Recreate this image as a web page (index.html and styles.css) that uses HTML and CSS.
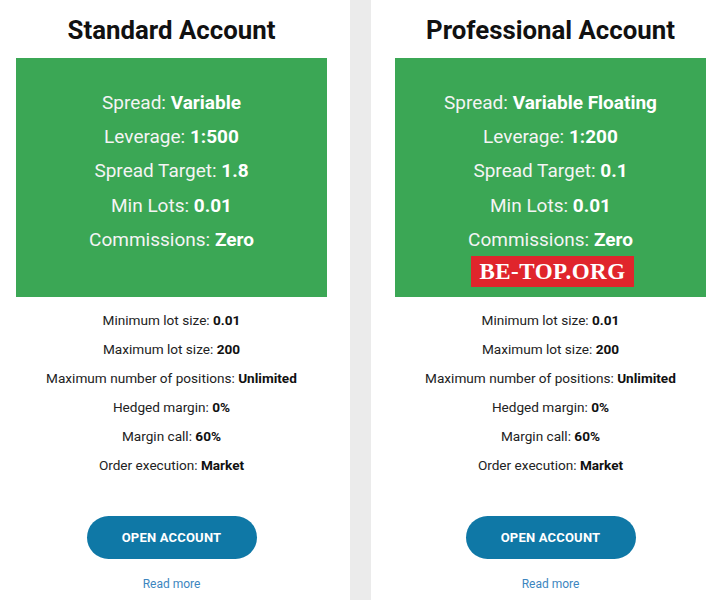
FILE: index.html
```html
<!DOCTYPE html>
<html lang="en">
<head>
    <meta charset="UTF-8">
    <meta name="viewport" content="width=device-width, initial-scale=1.0">
    <title>Account Types</title>
    <link rel="stylesheet" href="styles.css">
</head>
<body>
    <div class="accounts">
        <div class="account account-left">
            <h2>Standard Account</h2>
            <div class="highlights">
                <p>Spread: <b>Variable</b></p>
                <p>Leverage: <b>1:500</b></p>
                <p>Spread Target: <b>1.8</b></p>
                <p>Min Lots: <b>0.01</b></p>
                <p>Commissions: <b>Zero</b></p>
            </div>
            <ul class="details">
                <li>Minimum lot size: <b>0.01</b></li>
                <li>Maximum lot size: <b>200</b></li>
                <li>Maximum number of positions: <b>Unlimited</b></li>
                <li>Hedged margin: <b>0%</b></li>
                <li>Margin call: <b>60%</b></li>
                <li>Order execution: <b>Market</b></li>
            </ul>
            <a href="#" class="open-btn">OPEN ACCOUNT</a>
            <a href="#" class="read-more">Read more</a>
        </div>

        <div class="divider"></div>

        <div class="account account-right">
            <h2>Professional Account</h2>
            <div class="highlights">
                <p>Spread: <b>Variable Floating</b></p>
                <p>Leverage: <b>1:200</b></p>
                <p>Spread Target: <b>0.1</b></p>
                <p>Min Lots: <b>0.01</b></p>
                <p>Commissions: <b>Zero</b></p>
                <span class="watermark">BE-TOP.ORG</span>
            </div>
            <ul class="details">
                <li>Minimum lot size: <b>0.01</b></li>
                <li>Maximum lot size: <b>200</b></li>
                <li>Maximum number of positions: <b>Unlimited</b></li>
                <li>Hedged margin: <b>0%</b></li>
                <li>Margin call: <b>60%</b></li>
                <li>Order execution: <b>Market</b></li>
            </ul>
            <a href="#" class="open-btn">OPEN ACCOUNT</a>
            <a href="#" class="read-more">Read more</a>
        </div>
    </div>
</body>
</html>
```

FILE: styles.css
```css
body {
    margin: 0;
    font-family: Roboto, "Liberation Sans", Arial, sans-serif;
    background: #fff;
    color: #222;
}

.accounts {
    display: grid;
    grid-template-columns: 350px 21px 351px;
    height: 600px;
}

.divider {
    background: #ebebeb;
}

.account {
    display: flex;
    flex-direction: column;
    align-items: center;
    text-align: center;
}

.account-left {
    padding: 0 23px 0 16px;
}

.account-right {
    padding: 0 16px 0 24px;
}

.account h2 {
    margin: 14px 0 0;
    height: 44px;
    font-size: 25.8px;
    font-weight: 700;
    line-height: 32px;
    color: #111;
}

.highlights {
    position: relative;
    align-self: stretch;
    height: 239px;
    box-sizing: border-box;
    padding-top: 28px;
    background: #3ba755;
    color: #f4f4f4;
}

.highlights p {
    margin: 0;
    font-size: 19px;
    line-height: 34.2px;
}

.highlights b {
    color: #fff;
}

.watermark {
    position: absolute;
    left: 76px;
    top: 198px;
    width: 163px;
    height: 31px;
    background: #e0252c;
    color: #fff;
    font-family: "Liberation Serif", "Times New Roman", serif;
    font-weight: 700;
    font-size: 23px;
    line-height: 31px;
    letter-spacing: 0.5px;
}

.details {
    list-style: none;
    margin: 0;
    padding: 9px 0 0;
}

.details li {
    font-size: 13.6px;
    line-height: 29px;
    color: #222;
}

.details b {
    color: #111;
}

.open-btn {
    margin-top: 36px;
    width: 170px;
    height: 43px;
    border-radius: 22px;
    background: #0f78a6;
    color: #fff;
    font-size: 13px;
    font-weight: 700;
    line-height: 43px;
    text-decoration: none;
    letter-spacing: 0.2px;
}

.read-more {
    margin-top: 18px;
    font-size: 12px;
    color: #3d86c0;
    text-decoration: none;
}
```
